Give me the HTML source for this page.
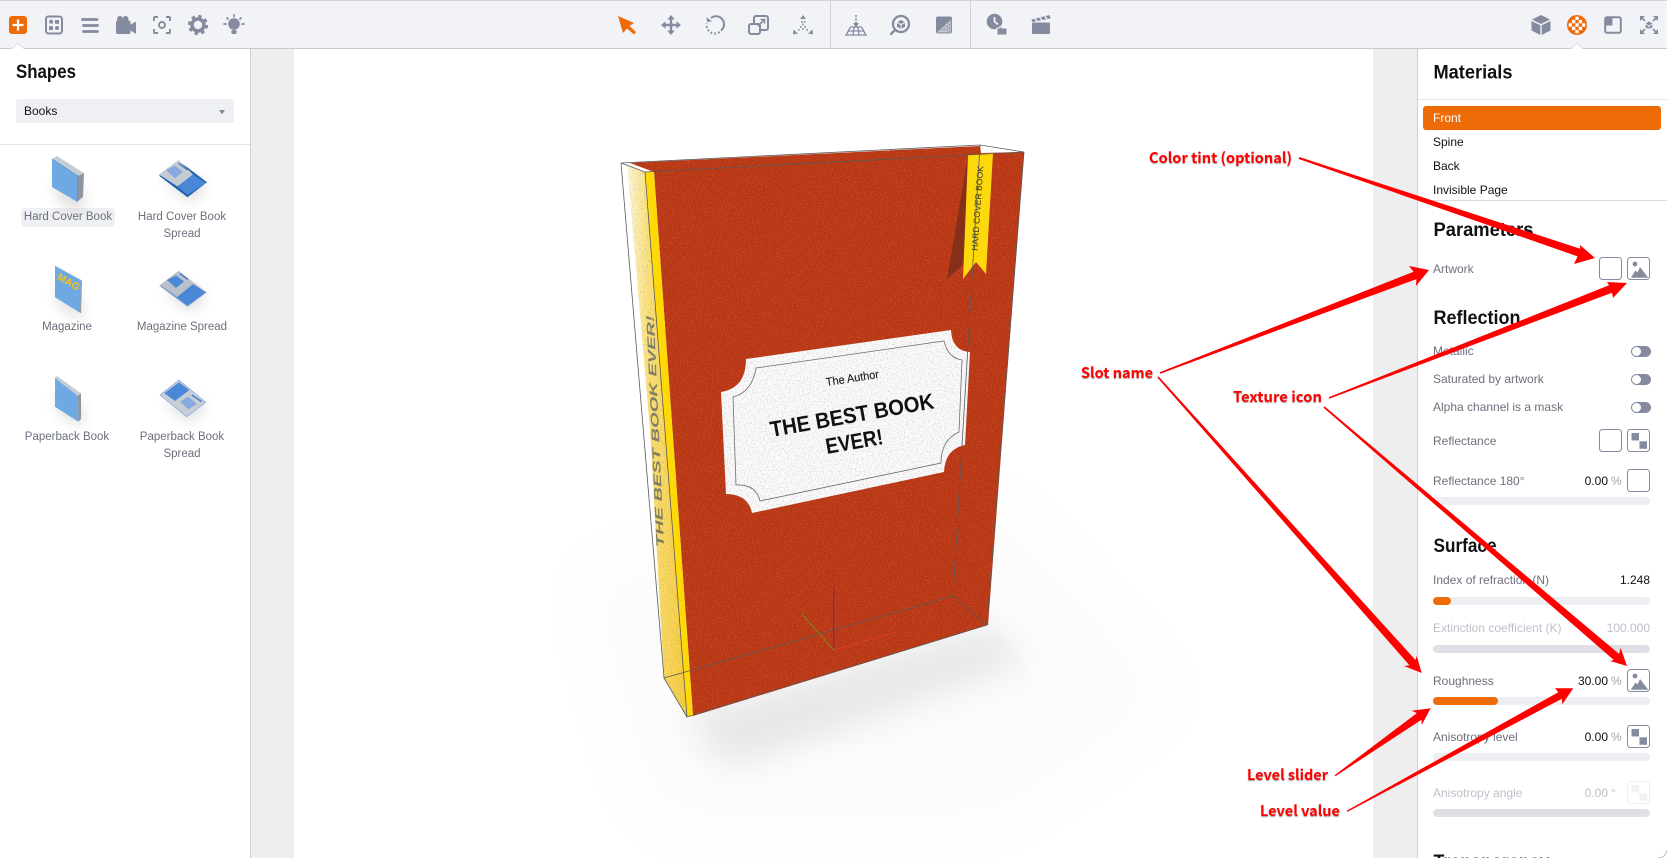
<!DOCTYPE html>
<html lang="en"><head><meta charset="utf-8"><title>Materials</title>
<style>
html,body{margin:0;padding:0;width:1667px;height:858px;overflow:hidden;background:#fff}
body{position:relative;font-family:"Liberation Sans",sans-serif;font-size:12px;color:#6c707d}
.a{position:absolute}
.t{position:absolute;white-space:nowrap;line-height:14px;height:14px}
.d{color:#111}
.v{position:absolute;white-space:nowrap;line-height:14px;text-align:right;color:#111}
.p{position:absolute;line-height:14px;color:#a0a4b0}
.f{color:#bcc0c9}
.c{position:absolute;width:110px;text-align:center;line-height:17px;font-size:11.5px}
.box{position:absolute;width:20.6px;height:20.6px;border:1.7px solid #858b9e;border-radius:3.5px;box-sizing:content-box}
.sl{position:absolute;left:1433px;width:217px;height:8px;border-radius:4px;background:#edeef2}
.sl.g{background:#dfe0e6}
.sl i{display:block;height:8px;border-radius:4px;background:#ee6c08}
.tg{position:absolute;left:1631px;width:20px;height:11px;border-radius:6px;background:#858b9e}
.tg i{position:absolute;left:1px;top:1px;width:9px;height:9px;border-radius:50%;background:#fff}
</style></head><body>

<!-- gutters + canvas -->
<div class="a" style="left:251px;top:48px;width:43px;height:810px;background:#eeeeee"></div>
<div class="a" style="left:1373px;top:48px;width:44px;height:810px;background:#eeeeee"></div>

<!-- 3D scene -->
<svg class="a" style="left:0;top:0" width="1667" height="858" viewBox="0 0 1667 858">
<defs>
<filter id="blur" x="-40%" y="-60%" width="180%" height="220%"><feGaussianBlur stdDeviation="18"/></filter>
<filter id="blur2" x="-40%" y="-40%" width="180%" height="180%"><feGaussianBlur stdDeviation="40"/></filter>
<filter id="grain" x="0" y="0" width="100%" height="100%" color-interpolation-filters="sRGB">
 <feTurbulence type="fractalNoise" baseFrequency="0.8" numOctaves="2" seed="4" result="n"/>
 <feColorMatrix in="n" type="matrix" values="0 0 0 0 .95 0 0 0 0 .5 0 0 0 0 .35 0 0 0 1 -.42" result="c"/>
 <feComposite in="c" in2="SourceAlpha" operator="in" result="m"/>
 <feMerge><feMergeNode in="SourceGraphic"/><feMergeNode in="m"/></feMerge>
</filter>
<filter id="grainw" x="0" y="0" width="100%" height="100%" color-interpolation-filters="sRGB">
 <feTurbulence type="fractalNoise" baseFrequency="0.7" numOctaves="2" seed="9" result="n"/>
 <feColorMatrix in="n" type="matrix" values="0 0 0 0 .5 0 0 0 0 .5 0 0 0 0 .5 0 0 0 1 -.5" result="c"/>
 <feComposite in="c" in2="SourceAlpha" operator="in" result="m"/>
 <feMerge><feMergeNode in="SourceGraphic"/><feMergeNode in="m"/></feMerge>
</filter>
<linearGradient id="sp" x1="0" y1="0" x2="1" y2="0"><stop offset="0" stop-color="#fff8dc"/><stop offset=".35" stop-color="#fde27a"/><stop offset="1" stop-color="#f9cc3a"/></linearGradient>
</defs>
<polygon points="560,560 1000,480 1200,700 1000,840 640,840" fill="#000" opacity=".012" filter="url(#blur2)"/>
<polygon points="680,716 990,626 1030,660 730,770" fill="#000" opacity=".08" filter="url(#blur)"/>
<polygon points="627,164 645,172 687,717 664,678 650,430" fill="url(#sp)" filter="url(#grainw)"/>
<polygon points="630,163 980,146 981,153 1024,152 988,625 693,716 654,172" fill="#b53412" filter="url(#grain)"/>
<polygon points="645,172 654,172 693,716 687,717" fill="#ffd808"/>
<text transform="translate(664,547) rotate(-92.5)" font-family="Liberation Sans" font-weight="700" font-style="italic" font-size="11" fill="#3a4760" opacity=".62" textLength="232" lengthAdjust="spacingAndGlyphs">THE BEST BOOK EVER!</text>
<polygon points="968,156 947,279 963,265 967,220" fill="#86301a"/>
<polygon points="968,155 993,153 986,274 976,262 963,279" fill="#fdd80c"/>
<text transform="translate(977.5,251) rotate(-86)" font-family="Liberation Sans" font-size="8.6" fill="#33301a" textLength="85" lengthAdjust="spacingAndGlyphs">HARD COVER BOOK</text>
<path d="M746,359 L951,330 Q952,351 970,352 L965,445 Q945,449 944,472 L752,513 Q748,494 726,494 L721,392 Q746,388 746,359 Z" fill="#fbfbfb" filter="url(#grainw)"/>
<path d="M756,368 L944,341 Q948,358 962,360 L959,432 Q941,440 941,463 L760,501 Q756,484 736,485 L733,397 Q752,392 756,368 Z" fill="none" stroke="#6d6d6d" stroke-width=".8"/>
<text transform="translate(826.5,386) rotate(-8.7)" font-family="Liberation Sans" font-size="11.5" fill="#1c1c1c" stroke="#1c1c1c" stroke-width=".15" textLength="53.5" lengthAdjust="spacingAndGlyphs">The Author</text>
<text transform="translate(771.5,437) rotate(-10)" font-family="Liberation Sans" font-weight="700" font-size="22" fill="#111" textLength="166" lengthAdjust="spacingAndGlyphs">THE BEST BOOK</text>
<text transform="translate(827,454) rotate(-10)" font-family="Liberation Sans" font-weight="700" font-size="22" fill="#111" textLength="58" lengthAdjust="spacingAndGlyphs">EVER!</text>
<g fill="none" stroke="#5a5a5a" stroke-width=".8">
<path d="M621,163 L980,145 L1024,152 L645,172 Z"/>
<path d="M621,163 L664,678 L953,596 L980,145"/>
<path d="M645,172 L687,717 L987,625 L1024,152"/>
<path d="M664,678 L687,717 M953,596 L987,625"/>
</g>
<path d="M833.7,586.7 V650" stroke="#5a2aa8" stroke-width="1" fill="none"/>
<path d="M801.7,614 L833.7,650" stroke="#7b8a1e" stroke-width="1" fill="none"/>
<path d="M833.7,650 L896,632" stroke="#e83a2a" stroke-width="1" fill="none" stroke-dasharray="3 1"/>
</svg>

<!-- Left panel -->
<div class="a" style="left:0;top:48px;width:250px;height:810px;background:#fff;border-right:1px solid #cfcfd2"></div>
<svg class="a" style="left:0;top:60px" width="250" height="30"><text x="16" y="18" font-family="Liberation Sans" font-weight="700" font-size="19.5" fill="#111" textLength="60" lengthAdjust="spacingAndGlyphs">Shapes</text></svg>
<div class="a" style="left:16px;top:99px;width:218px;height:24px;background:#eff0f4;border-radius:3px"></div>
<div class="t d" style="left:24px;top:104px">Books</div>
<svg class="a" style="left:218px;top:108px" width="8" height="8"><polygon points="1,2 7,2 4,6.5" fill="#858b9e"/></svg>
<div class="a" style="left:0;top:144px;width:250px;height:1px;background:#e2e3e8"></div>
<div class="a" style="left:21px;top:208px;width:94px;height:19px;background:#eff0f4;border-radius:4px"></div>

<svg class="a" style="left:0;top:145px" width="250" height="320" viewBox="0 145 250 320">
<defs><filter id="sb" x="-60%" y="-60%" width="220%" height="220%"><feGaussianBlur stdDeviation="7"/></filter></defs>
<!-- shadows -->
<g fill="#000" opacity=".13" filter="url(#sb)">
<polygon points="56,175 86,195 84,208 78,212 56,198"/>
<polygon points="164,182 190,202 207,188 190,176"/>
<polygon points="56,285 84,305 82,320 58,306"/>
<polygon points="164,292 190,312 207,298 190,286"/>
<polygon points="56,390 84,410 82,428 58,412"/>
<polygon points="164,402 190,422 207,408 190,396"/>
</g>
<!-- Hard cover -->
<polygon points="52,159 57,156 84,173 78,176" fill="#c6ccd6"/>
<polygon points="52,159 78,176 77,201.7 52,187" fill="#6ea9e3"/>
<polygon points="78,176 84,173 83,197 77,201.7" fill="#8e959e"/>
<path d="M52,159 L78,176 L77,201.7" fill="none" stroke="#4d8fd0" stroke-width=".7"/>
<!-- Hard cover spread -->
<polygon points="178.6,160.7 159,175.7 187.5,197.3 207,182.3" fill="#1f62ad"/>
<polygon points="178.6,160 159,174.5 177.5,186.5 193,174.5" fill="#c5cad3"/>
<polygon points="193,174.5 206,183 187.5,195 177.5,186.5" fill="#4a87d6"/>
<polygon points="166,170 175,165.7 183,171.7 175,178.3" fill="#86a9df"/>
<path d="M178.6,163.3 L188,170" stroke="#3f78c8" stroke-width="1.4"/>
<!-- Magazine -->
<polygon points="55,265.7 81,280 80,312.7 55,297.3" fill="#6ea9e3"/>
<polygon points="81,280 82,281 81,313 80,312.7" fill="#8e959e"/>
<text transform="translate(56.5,279) rotate(30)" font-family="Liberation Sans" font-weight="700" font-size="10.5" fill="#f2c21b" textLength="24" lengthAdjust="spacingAndGlyphs">MAG</text>
<!-- Magazine spread -->
<polygon points="178.6,270.7 159,285.7 187.5,307.3 207,292.3" fill="#c5cad3"/>
<polygon points="180,272 160.5,286 187.5,306 206,292.5 193,284 177,297" fill="#4a87d6"/>
<polygon points="178.6,270.7 160,285 177,297 193,284" fill="#b8c0cc"/>
<polygon points="167,280 176,275.5 184,281.5 176,288" fill="#4a87d6"/>
<path d="M180,273.5 L188,279.5" stroke="#3f78c8" stroke-width="1.4"/>
<!-- Paperback -->
<polygon points="55,378 57,376 81,393.3 78,396" fill="#c6ccd6"/>
<polygon points="55,378 78,396 78.3,421.7 55,406.7" fill="#6ea9e3"/>
<polygon points="78,396 81,393.3 81,419 78.3,421.7" fill="#8e959e"/>
<!-- Paperback spread -->
<polygon points="179,380 160,395 186.7,416.7 205.7,402.3" fill="#c8cdd6" stroke="#8fb1dc" stroke-width=".8"/>
<polygon points="179,382.3 189.3,390 175,401 164.3,393.3" fill="#4a87d6"/>
<polygon points="180,401.7 188.3,396.7 196.7,404 188.3,409.3" fill="#86a9df"/>
<path d="M191.7,395 L201.7,401.7" stroke="#3f78c8" stroke-width="1.4"/>
</svg>

<div class="c" style="left:13px;top:209px">Hard Cover Book</div>
<div class="c" style="left:127px;top:209px">Hard Cover Book<br>Spread</div>
<div class="c" style="left:12px;top:319px">Magazine</div>
<div class="c" style="left:127px;top:319px">Magazine Spread</div>
<div class="c" style="left:12px;top:429px">Paperback Book</div>
<div class="c" style="left:127px;top:429px">Paperback Book<br>Spread</div>

<!-- Right panel -->
<div class="a" style="left:1417px;top:48px;width:250px;height:810px;background:#fff;border-left:1px solid #cfcfd2;box-sizing:border-box"></div>
<svg class="a" style="left:1417px;top:60px" width="250" height="800" viewBox="1417 60 250 800">
<g font-family="Liberation Sans" font-weight="700" font-size="19.5" fill="#111">
<text x="1433.5" y="78.5" textLength="79" lengthAdjust="spacingAndGlyphs">Materials</text>
<text x="1433.5" y="236" textLength="100" lengthAdjust="spacingAndGlyphs">Parameters</text>
<text x="1433.5" y="324" textLength="87" lengthAdjust="spacingAndGlyphs">Reflection</text>
<text x="1433.5" y="552" textLength="63" lengthAdjust="spacingAndGlyphs">Surface</text>
<text x="1433.5" y="868" textLength="116" lengthAdjust="spacingAndGlyphs">Transparency</text>
</g>
</svg>
<div class="a" style="left:1418px;top:99px;width:249px;height:1px;background:#e2e3e8"></div>
<div class="a" style="left:1423px;top:106px;width:238px;height:23.5px;background:#ee6c08;border-radius:3px"></div>
<div class="t" style="left:1433px;top:111px;color:#fff">Front</div>
<div class="t d" style="left:1433px;top:135px">Spine</div>
<div class="t d" style="left:1433px;top:159px">Back</div>
<div class="a" style="left:1418px;top:180px;width:249px;height:20px;overflow:hidden"><div class="t d" style="left:15px;top:3px">Invisible Page</div></div>
<div class="a" style="left:1418px;top:200px;width:249px;height:1px;background:#dcdde2"></div>

<div class="t" style="left:1433px;top:262px">Artwork</div>
<div class="box" style="left:1599px;top:257px"></div>
<div class="box" style="left:1627px;top:257px"></div>

<div class="t" style="left:1433px;top:344px">Metallic</div>
<div class="tg" style="top:345.5px"><i></i></div>
<div class="t" style="left:1433px;top:372px">Saturated by artwork</div>
<div class="tg" style="top:373.5px"><i></i></div>
<div class="t" style="left:1433px;top:400px">Alpha channel is a mask</div>
<div class="tg" style="top:401.5px"><i></i></div>

<div class="t" style="left:1433px;top:434px">Reflectance</div>
<div class="box" style="left:1599px;top:429px"></div>
<div class="box" style="left:1627px;top:429px"></div>

<div class="t" style="left:1433px;top:474px">Reflectance 180°</div>
<div class="v" style="right:59px;top:474px">0.00</div><div class="p" style="left:1611px;top:474px">%</div>
<div class="box" style="left:1627px;top:469px"></div>
<div class="sl" style="top:497px"></div>

<div class="t" style="left:1433px;top:573px">Index of refraction (N)</div>
<div class="v" style="right:17px;top:573px">1.248</div>
<div class="sl" style="top:597px"><i style="width:18px"></i></div>

<div class="t f" style="left:1433px;top:621px">Extinction coefficient (K)</div>
<div class="v f" style="right:17px;top:621px">100.000</div>
<div class="sl g" style="top:645px"></div>

<div class="t" style="left:1433px;top:674px">Roughness</div>
<div class="v" style="right:59px;top:674px">30.00</div><div class="p" style="left:1611px;top:674px">%</div>
<div class="box" style="left:1627px;top:669px"></div>
<div class="sl" style="top:697px"><i style="width:65px"></i></div>

<div class="t" style="left:1433px;top:730px">Anisotropy level</div>
<div class="v" style="right:59px;top:730px">0.00</div><div class="p" style="left:1611px;top:730px">%</div>
<div class="box" style="left:1627px;top:725px"></div>
<div class="sl" style="top:753px"></div>

<div class="t f" style="left:1433px;top:786px">Anisotropy angle</div>
<div class="v f" style="right:59px;top:786px">0.00</div><div class="p f" style="left:1611px;top:786px">°</div>
<div class="box" style="left:1627px;top:781px;border-color:#eeeff2"></div>
<div class="sl g" style="top:809px"></div>

<!-- slot glyphs -->
<svg class="a" style="left:1627px;top:250px" width="40" height="600" viewBox="1627 250 40 600">
<g fill="#858b9e">
<g id="img"><circle cx="1635" cy="264" r="2.4"/><path d="M1630.8,277.8 L1635.5,270.5 L1637.5,272.5 L1640,267 L1648.3,277.8 Z"/></g>
<use href="#img" y="412"/>
<g id="chk"><rect x="1631.5" y="433" width="7.5" height="7.5"/><rect x="1639.5" y="441.3" width="7.5" height="7.5"/></g>
<use href="#chk" y="296"/>
<use href="#chk" y="352" opacity=".1"/>
</g>
</svg>

<!-- Toolbar -->
<div class="a" style="left:0;top:0;width:1667px;height:48px;background:#f2f3f7;border-top:1px solid #d2d3d7;box-sizing:border-box"></div>
<div class="a" style="left:0;top:48px;width:1667px;height:1px;background:#cacbd0"></div>
<div class="a" style="left:830px;top:1px;width:1px;height:47px;background:#d0d2d9"></div>
<div class="a" style="left:970px;top:1px;width:1px;height:47px;background:#d0d2d9"></div>

<svg class="a" style="left:0;top:0" width="1667" height="52" viewBox="0 0 1667 52">
<defs><clipPath id="bc"><circle r="8.4"/></clipPath></defs>
<!-- notches -->
<path d="M12,49 L18,43.5 L24,49 Z" fill="#fff"/><path d="M12,48.5 L18,43.5 L24,48.5" fill="none" stroke="#d4d5da" stroke-width=".8"/>
<path d="M1571,49 L1577,43.5 L1583,49 Z" fill="#fff"/><path d="M1571,48.5 L1577,43.5 L1583,48.5" fill="none" stroke="#d4d5da" stroke-width=".8"/>

<!-- plus -->
<rect x="9" y="16" width="18" height="18" rx="3" fill="#ee6c08"/>
<path d="M18,19.5 V30.5 M12.5,25 H23.5" stroke="#fff" stroke-width="2.2" fill="none"/>

<g fill="#858b9e" stroke="none">
<!-- shapes -->
<g transform="translate(54,25)"><rect x="-8" y="-8.5" width="16" height="17" rx="2.5" fill="none" stroke="#858b9e" stroke-width="2"/><circle cx="-2.8" cy="-3.2" r="2"/><rect x="1" y="-5" width="4" height="3.8"/><rect x="-5" y="1.2" width="4" height="3.8"/><circle cx="3" cy="3" r="2"/></g>
<!-- list -->
<g transform="translate(90,25)" stroke="#858b9e" stroke-width="2.8" stroke-linecap="round"><path d="M-7.5,-5.5 H7 M-6.5,.5 H7.5 M-6.5,6.5 H7.5" fill="none"/></g>
<!-- camera -->
<g transform="translate(126,25)"><circle cx="-6" cy="-6" r="3"/><circle cx="-.5" cy="-6" r="3"/><rect x="-10" y="-4.5" width="14.5" height="13.5" rx="2"/><polygon points="4,0 10,-3.5 10,9 4,5"/></g>
<!-- focus -->
<g transform="translate(162,25)" fill="none" stroke="#858b9e" stroke-width="1.9"><path d="M-4,-8 H-7 a1,1 0 0 0 -1,1 V-4 M4,-8 H7 a1,1 0 0 1 1,1 V-4 M-8,4 V7 a1,1 0 0 0 1,1 H-4 M8,4 V7 a1,1 0 0 1 -1,1 H4"/><circle r="3"/></g>
<!-- gear -->
<g transform="translate(198,25)" fill="none" stroke="#858b9e"><circle r="6" stroke-width="3.6"/><circle r="8.6" stroke-width="3" stroke-dasharray="3.4 3.35"/></g>
<!-- bulb -->
<g transform="translate(234,25)"><circle cx="0" cy="-1" r="5.8"/><rect x="-2.6" y="5" width="5.2" height="4" rx="1.5"/><path d="M0,-10 V-8.3 M-7,-7 L-6,-6 M7,-7 L6,-6 M-10,-1 H-8 M10,-1 H8" stroke="#858b9e" stroke-width="1.7" stroke-linecap="round" fill="none"/></g>

<!-- move -->
<g transform="translate(671,25)"><path d="M-6,0 H6 M0,-6 V6" stroke="#858b9e" stroke-width="2.4" fill="none"/><polygon points="0,-10 -3.8,-5.5 3.8,-5.5"/><polygon points="0,10 -3.8,5.5 3.8,5.5"/><polygon points="-10,0 -5.5,-3.8 -5.5,3.8"/><polygon points="10,0 5.5,-3.8 5.5,3.8"/></g>
<!-- rotate -->
<g transform="translate(715,25)" fill="none" stroke="#858b9e" stroke-width="2"><path d="M-4,-7 A8,8 0 0 1 6,5.5"/><path d="M4.5,7 A8.2,8.2 0 0 1 -8.2,-1.5" stroke-dasharray="1.8 2"/><path d="M-8.5,-8 L-8,-3 L-3,-3.6 Z" fill="#858b9e" stroke="none"/></g>
<!-- scale -->
<g transform="translate(759,25)" fill="none" stroke="#858b9e" stroke-width="2"><rect x="-10" y="-1" width="11" height="10" rx="2"/><path d="M-5,-1 V-7 a2,2 0 0 1 2,-2 H7 a2,2 0 0 1 2,2 V3 a2,2 0 0 1 -2,2 H1"/><path d="M-1,1 L5,-5 M1.5,-5.5 H5.5 V-1.5" stroke-width="1.6"/></g>
<!-- axes -->
<g transform="translate(803,25)"><polygon points="0,-10 -3,-6 3,-6"/><polygon points="-10,9.5 -9.5,4.5 -5,8.5"/><polygon points="10,9.5 9.5,4.5 5,8.5"/><path d="M-2,-4 h1.6v1.6h-1.6z M.8,-4 h1.6v1.6h-1.6z M-.8,-1.5 h1.6v1.6h-1.6z M-3,1 h1.6v1.6h-1.6z M1.4,1 h1.6v1.6h-1.6z M-.8,3 h1.6v1.6h-1.6z M-5,4 h1.6v1.6h-1.6z M3.4,4 h1.6v1.6h-1.6z"/></g>
<!-- place -->
<g transform="translate(856,25)" fill="none" stroke="#858b9e"><path d="M0,-10 V-1" stroke-width="1.6" stroke-dasharray="2 1.2"/><polygon points="0,2.5 -3,-2 3,-2" fill="#858b9e" stroke="none"/><path d="M-5.5,2 H5.5 L10,10 H-10 Z M-8,6 H8 M-2,2 L-3,10 M2,2 L3,10" stroke-width="1.3"/></g>
<!-- circle cube -->
<g transform="translate(900,25)"><circle cx="1" cy="-1" r="8" fill="none" stroke="#858b9e" stroke-width="2.3"/><path d="M-5,5 L-9,9" stroke="#858b9e" stroke-width="2.3" stroke-linecap="round"/><polygon points="1,-5 4.5,-3 1,-1 -2.5,-3"/><polygon points="-3,-2 .5,0 .5,3.7 -3,1.7"/><polygon points="5,-2 1.5,0 1.5,3.7 5,1.7"/></g>
<!-- texture -->
<g transform="translate(944,25)"><rect x="-8" y="-8.5" width="16" height="17" rx="2"/><path d="M-7,7.5 L7,-6 L7,7.5 Z" fill="#f2f3f7" opacity=".55"/></g>
<!-- clock -->
<g transform="translate(997,25)"><circle cx="-2.5" cy="-3.5" r="7.8"/><path d="M-2.5,-8 V-3.5 L1,-.5" stroke="#f2f3f7" stroke-width="1.8" fill="none"/><path d="M0,3 h3 v-1.5 h2 v1.5 h5 v6 a1,1 0 0 1 -1,1 H1 a1,1 0 0 1 -1,-1 Z" stroke="#f2f3f7" stroke-width="1"/></g>
<!-- clapper -->
<g transform="translate(1041,25)"><rect x="-9" y="-2.5" width="18" height="11.5" rx="1"/><polygon points="-9.5,-5.5 8.5,-10 9.5,-6.5 -8.8,-3"/><path d="M-6,-6.5 L-4,-3.5 M-1,-7.5 L1,-4.5 M4,-8.8 L6,-5.8" stroke="#f2f3f7" stroke-width="1.4"/></g>

<!-- cube -->
<g transform="translate(1541,25)"><polygon points="0,-10 9,-5.5 0,-1 -9,-5.5"/><polygon points="-9.5,-4 -.7,.3 -.7,10 -9.5,5.5"/><polygon points="9.5,-4 .7,.3 .7,10 9.5,5.5"/></g>
<!-- frame -->
<g transform="translate(1613,25)"><rect x="-7.8" y="-7.8" width="15.6" height="15.6" rx="1.8" fill="none" stroke="#858b9e" stroke-width="2"/><path d="M-8,-8 H-.5 V.5 H-8 Z"/></g>
<!-- expand -->
<g transform="translate(1649,25)"><path d="M-9,-9 H-4 L-9,-4 Z M9,-9 H4 L9,-4 Z M-9,9 H-4 L-9,4 Z M9,9 H4 L9,4 Z"/><path d="M-7,-7 L-4,-4 M7,-7 L4,-4 M-7,7 L-4,4 M7,7 L4,4" stroke="#858b9e" stroke-width="1.7"/><polygon points="0,-3.5 3.4,-1.5 0,.5 -3.4,-1.5"/><polygon points="-3.4,-.5 -.4,1.2 -.4,4 -3.4,2.4"/><polygon points="3.4,-.5 .4,1.2 .4,4 3.4,2.4"/></g>
</g>

<!-- texture dots -->
<g fill="#858b9e" transform="translate(944,25)"><circle cx="3" cy="-2" r=".8"/><circle cx="5.5" cy="-4" r=".8"/><circle cx="0" cy="1" r=".8"/><circle cx="3" cy="1.5" r=".8"/><circle cx="5.5" cy="-.5" r=".8"/><circle cx="-3" cy="4" r=".8"/><circle cx="0" cy="4.5" r=".8"/><circle cx="3" cy="4.5" r=".8"/><circle cx="5.5" cy="3" r=".8"/><circle cx="5.5" cy="6" r=".8"/></g>

<!-- select arrow -->
<polygon points="618,16 634,23 629.5,26 636,32 634,34.5 627,28.5 623,33" fill="#ee6c08"/>

<!-- material ball -->
<g transform="translate(1577,25)"><circle r="10" fill="#ee6c08"/>
<g fill="#fff" clip-path="url(#bc)">
<rect x="-1.7" y="-1.7" width="3.4" height="3.4"/>
<rect x="-8.5" y="-1.7" width="3.4" height="3.4"/><rect x="5.1" y="-1.7" width="3.4" height="3.4"/>
<rect x="-1.7" y="-8.5" width="3.4" height="3.4"/><rect x="-1.7" y="5.1" width="3.4" height="3.4"/>
<rect x="-5.1" y="-5.1" width="3.4" height="3.4"/><rect x="1.7" y="-5.1" width="3.4" height="3.4"/>
<rect x="-5.1" y="1.7" width="3.4" height="3.4"/><rect x="1.7" y="1.7" width="3.4" height="3.4"/>
</g></g>
</svg>

<!-- Annotations -->
<svg class="a" style="left:0;top:0" width="1667" height="858" viewBox="0 0 1667 858">
<defs><filter id="ts" x="-5%" y="-20%" width="110%" height="150%"><feDropShadow dx="0" dy="1" stdDeviation=".6" flood-color="#000" flood-opacity=".4"/></filter></defs>
<g fill="#fe0000">
<polygon points="1299.3,157 1580.2,248.8 1580,245 1595,258 1574,264 1577.6,256.4 1298.7,159"/>
<polygon points="1159.7,372.3 1413.6,271.7 1409,266 1429,270 1416,286 1416.4,279.1 1160.3,373.7"/>
<polygon points="1158.6,376.4 1415.4,660 1416.7,656 1421.7,673 1404,666 1409.4,665.3 1157.4,377.6"/>
<polygon points="1328.7,397.3 1609,285.3 1607,282 1627,283 1613,298 1612,292.7 1329.3,398.7"/>
<polygon points="1324.6,406.4 1619,653.9 1620.7,648 1627,666 1610,661 1613.8,660 1323.4,407.6"/>
<polygon points="1334.6,775.2 1416.9,713.1 1411.7,710.7 1430.7,708.3 1421.7,725 1421.5,719.7 1335.4,776.2"/>
<polygon points="1346.7,810.7 1558.3,692.2 1555,688.3 1573.3,688.3 1562.3,704.3 1561.9,698.8 1347.3,811.9"/>
</g>
<g font-family="'Noto Sans CJK JP',sans-serif" font-weight="700" font-size="14.5" fill="#fe0000" filter="url(#ts)">
<text x="1149" y="163" textLength="143" lengthAdjust="spacingAndGlyphs">Color tint (optional)</text>
<text x="1081" y="378" textLength="72" lengthAdjust="spacingAndGlyphs">Slot name</text>
<text x="1233" y="402" textLength="89" lengthAdjust="spacingAndGlyphs">Texture icon</text>
<text x="1247" y="780" textLength="81" lengthAdjust="spacingAndGlyphs">Level slider</text>
<text x="1260" y="816" textLength="80" lengthAdjust="spacingAndGlyphs">Level value</text>
</g>
<path d="M1667,850 Q1666,858 1657,858" fill="none" stroke="#bdbdbd" stroke-width="1"/>
</svg>
</body></html>
